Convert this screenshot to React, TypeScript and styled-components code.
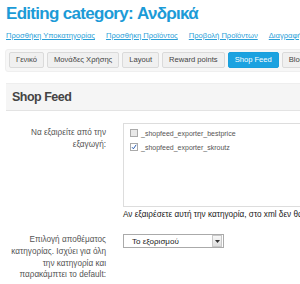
import React from "react";
import styled, { createGlobalStyle } from "styled-components";

const Global = createGlobalStyle`
  html, body { margin: 0; padding: 0; background: #fff; overflow: hidden; }
  body { font-family: "Liberation Sans", Arial, sans-serif; }
`;

const Page = styled.div`
  width: 440px;
  padding: 4px 0 0 6px;
`;

const Title = styled.h1`
  margin: 0;
  font-size: 17px;
  line-height: 20px;
  letter-spacing: -0.7px;
  font-weight: bold;
  color: #1c9bd7;
`;

const LinkRow = styled.div`
  display: flex;
  gap: 11px;
  margin-top: 7px;
  font-size: 7.6px;
  line-height: 10px;
`;

const Link = styled.a`
  color: #2b9fd8;
  text-decoration: underline;
  white-space: nowrap;
`;

const TabBar = styled.div`
  display: flex;
  gap: 3px;
  margin: 8px 0 0 -1px;
  padding: 2px 3px 3px;
  background: #f7f7f7;
  border: 1px solid #efefef;
  border-radius: 3px;
`;

const Tab = styled.div<{ $active?: boolean }>`
  height: 14px;
  line-height: 14px;
  padding: 0 6px;
  font-size: 7.6px;
  white-space: nowrap;
  border-radius: 2px;
  border: 1px solid ${(p) => (p.$active ? "#1a9fdc" : "#dadada")};
  background: ${(p) => (p.$active ? "#1ca2e0" : "#f0f0f0")};
  color: ${(p) => (p.$active ? "#fff" : "#444")};
`;

const Panel = styled.div`
  margin-top: 11px;
  border-top: 1px solid #eeeeee;
`;

const PanelHeader = styled.div`
  height: 26px;
  display: flex;
  align-items: center;
  padding-left: 6px;
  background: #f5f5f5;
  border-bottom: 1px solid #e3e3e3;
  font-size: 12.5px;
  letter-spacing: -0.5px;
  font-weight: bold;
  color: #444;
`;

const FormRow = styled.div<{ $top: number }>`
  display: grid;
  grid-template-columns: 100px 1fr;
  column-gap: 17px;
  margin-top: ${(p) => p.$top}px;
`;

const Label = styled.div<{ $pad: number }>`
  text-align: right;
  font-size: 8.2px;
  line-height: 11.8px;
  color: #555;
  padding-top: ${(p) => p.$pad}px;
`;

const Field = styled.div`
  display: flex;
  flex-direction: column;
`;

const ListBox = styled.div`
  height: 77px;
  border: 1px solid #dddddd;
  padding: 5px 0 0 6px;
  display: flex;
  flex-direction: column;
  gap: 6px;
`;

const Option = styled.label`
  display: flex;
  align-items: center;
  gap: 3px;
  font-size: 7px;
  line-height: 7px;
  color: #555;
`;

const Box = styled.span<{ $checked?: boolean }>`
  width: 6px;
  height: 6px;
  border: 1px solid #aaa;
  background: ${(p) => (p.$checked ? "#fff" : "#e8e8e8")};
  display: inline-flex;
  align-items: center;
  justify-content: center;
`;

const Help = styled.div`
  margin-top: 2px;
  font-size: 8.2px;
  line-height: 12px;
  color: #222;
  white-space: nowrap;
`;

const Select = styled.div`
  width: 99px;
  height: 12px;
  border: 1px solid #aaa;
  display: flex;
  align-items: center;
  font-size: 8px;
  color: #222;
  background: #fff;
`;

const SelectText = styled.span`
  flex: 1;
  padding-left: 8px;
`;

const SelectBtn = styled.span`
  width: 8px;
  height: 10px;
  margin-right: 1px;
  border: 1px solid #c8c8c8;
  background: linear-gradient(#f8f8f8, #dedede);
  display: flex;
  align-items: center;
  justify-content: center;
`;

export default function App() {
  return (
    <>
      <Global />
      <Page>
        <Title>Editing category: Ανδρικά</Title>
        <LinkRow>
          <Link>Προσθήκη Υποκατηγορίας</Link>
          <Link>Προσθήκη Προϊόντος</Link>
          <Link>Προβολή Προϊόντων</Link>
          <Link>Διαγραφή</Link>
        </LinkRow>
        <TabBar>
          <Tab>Γενικό</Tab>
          <Tab>Μονάδες Χρήσης</Tab>
          <Tab>Layout</Tab>
          <Tab>Reward points</Tab>
          <Tab $active>Shop Feed</Tab>
          <Tab>Blog</Tab>
        </TabBar>
        <Panel>
          <PanelHeader>Shop Feed</PanelHeader>
          <FormRow $top={12}>
            <Label $pad={4}>
              Να εξαιρείτε από την
              <br />
              εξαγωγή:
            </Label>
            <Field>
              <ListBox>
                <Option>
                  <Box />
                  _shopfeed_exporter_bestprice
                </Option>
                <Option>
                  <Box $checked>
                    <svg width="6" height="6" viewBox="0 0 6 6">
                      <path d="M1 3.2 L2.4 4.8 L5.2 0.8" stroke="#2a5db0" strokeWidth="1" fill="none" />
                    </svg>
                  </Box>
                  _shopfeed_exporter_skroutz
                </Option>
              </ListBox>
              <Help>Αν εξαιρέσετε αυτή την κατηγορία, στο xml δεν θα εμφανίζονται τα προϊόντα της</Help>
            </Field>
          </FormRow>
          <FormRow $top={13}>
            <Label $pad={0}>
              Επιλογή αποθέματος
              <br />
              κατηγορίας. Ισχύει για όλη
              <br />
              την κατηγορία και
              <br />
              παρακάμπτει το default:
            </Label>
            <Field>
              <Select>
                <SelectText>Το εξορισμού</SelectText>
                <SelectBtn>
                  <svg width="5" height="3" viewBox="0 0 5 3">
                    <path d="M0 0 L5 0 L2.5 3 Z" fill="#333" />
                  </svg>
                </SelectBtn>
              </Select>
            </Field>
          </FormRow>
        </Panel>
      </Page>
    </>
  );
}
